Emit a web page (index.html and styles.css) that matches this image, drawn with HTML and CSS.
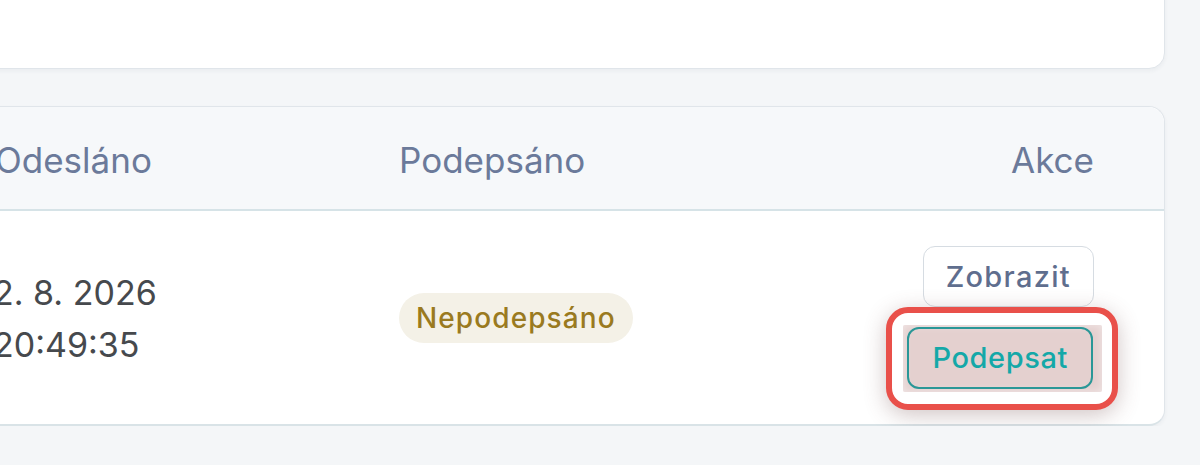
FILE: index.html
```html
<!DOCTYPE html>
<html lang="cs">
  <head>
    <meta charset="UTF-8" />
    <meta name="viewport" content="width=device-width, initial-scale=1.0" />
    <title>Dokumenty k podpisu</title>
    <link rel="stylesheet" href="styles.css">
  </head>
  <body>
    <div class="page">
      <div class="card summary"></div>

      <div class="card docs">
        <div class="docs-head">
          <div class="cell">Odesláno</div>
          <div class="cell">Podepsáno</div>
          <div class="cell right">Akce</div>
        </div>
        <div class="docs-row">
          <div class="cell date">
            <span>2. 8. 2026</span>
            <span>20:49:35</span>
          </div>
          <div class="cell">
            <span class="badge pending">Nepodepsáno</span>
          </div>
          <div class="cell actions">
            <button class="btn">Zobrazit</button>
            <span class="highlight">
              <button class="btn sign">Podepsat</button>
            </span>
          </div>
        </div>
      </div>
    </div>
  </body>
</html>
```

FILE: styles.css
```css
* {
  margin: 0;
  padding: 0;
  box-sizing: border-box;
  font-family: "Inter", "Open Sans", sans-serif;
}
body {
  background-color: #f4f6f8;
  overflow: hidden;
}
.page {
  margin-left: -60px;
  width: 1225px;
}
.card {
  background: #ffffff;
  border: 1px solid #e0e5ea;
  border-radius: 16px;
  box-shadow: 0 2px 4px rgba(30, 50, 70, 0.05);
}
.summary {
  height: 110px;
  margin-top: -41px;
  margin-bottom: 37px;
}
.docs {
  border-bottom: 2px solid #d9e3e7;
}
.docs-head,
.docs-row {
  display: grid;
  grid-template-columns: 404px 1fr auto;
  align-items: center;
  padding: 0 70px 0 54px;
}
.docs-head {
  height: 104px;
  background: #f6f8fa;
  border-radius: 16px 16px 0 0;
  border-bottom: 2px solid #d6e3e7;
  color: #6b7a9a;
  font-size: 35px;
  padding-top: 4px;
}
.docs-row {
  height: 213px;
}
.right {
  text-align: right;
}
.date {
  display: flex;
  flex-direction: column;
  color: #46494d;
  font-size: 34px;
  line-height: 52px;
  margin-left: -2px;
  padding-top: 3px;
}
.badge {
  display: inline-block;
  padding: 0 17px;
  height: 50px;
  line-height: 50px;
  border-radius: 25px;
  font-size: 28px;
  font-weight: 500;
  letter-spacing: 1.1px;
}
.pending {
  background: #f4f1e7;
  color: #9a7a20;
}
.actions {
  display: flex;
  flex-direction: column;
  align-items: flex-end;
  gap: 20px;
  padding-bottom: 1px;
}
.btn {
  background: #ffffff;
  border: 1px solid #d6dce2;
  border-radius: 12px;
  color: #5f6e8e;
  font-size: 29px;
  font-weight: 500;
  letter-spacing: 1.3px;
  height: 61px;
  padding: 0 22px;
  cursor: pointer;
}
.sign {
  position: relative;
  z-index: 1;
  background: transparent;
  border: 2px solid #2a9797;
  color: #14a8a8;
  letter-spacing: 0.6px;
  height: 62px;
  padding: 0 23px;
}
.highlight {
  position: relative;
  display: inline-block;
  margin-right: 1px;
}
/* annotation frame round the sign button */
.highlight::before {
  content: "";
  position: absolute;
  top: -20px;
  left: -21px;
  right: -25px;
  bottom: -21px;
  border: 6px solid #e9504a;
  border-radius: 22px;
  background: #ffffff;
  box-shadow: 0 5px 22px rgba(110, 70, 70, 0.32);
}
.highlight::after {
  content: "";
  position: absolute;
  top: -2px;
  left: -4px;
  right: -9px;
  bottom: -3px;
  background: #e4d0cf;
  box-shadow: inset 0 0 10px rgba(255, 255, 255, 0.5);
  border-radius: 2px;
}
```
